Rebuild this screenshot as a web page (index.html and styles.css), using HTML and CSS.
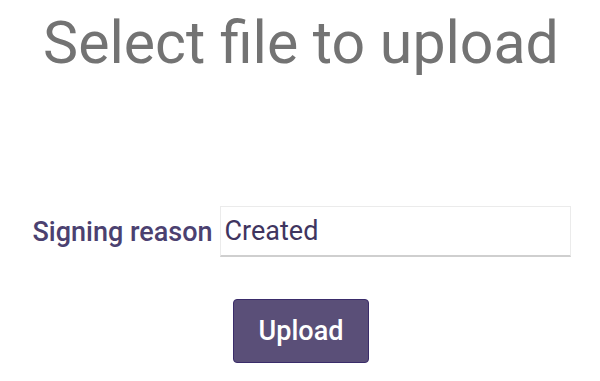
FILE: index.html
```html
<!DOCTYPE html>
<html>
<head>
<meta charset="utf-8">
<link rel="stylesheet" href="styles.css">
</head>
<body>
<div class="page">
  <h1 class="title">Select file to upload</h1>
  <form class="form">
    <div class="row">
      <label class="label" for="reason">Signing reason</label>
      <input class="input" id="reason" type="text" value="Created">
    </div>
    <div class="actions">
      <button class="btn" type="button">Upload</button>
    </div>
  </form>
</div>
</body>
</html>
```
FILE: styles.css
```css
html, body {
  margin: 0;
  padding: 0;
  background: #ffffff;
}
.page {
  width: 600px;
  font-family: Roboto, "Noto Sans", sans-serif;
  display: flex;
  flex-direction: column;
  align-items: center;
}
.title {
  margin: 8px 0 0 2px;
  font-size: 59px;
  font-weight: 400;
  line-height: 70px;
  color: #737373;
}
.form {
  margin-top: 128px;
  display: flex;
  flex-direction: column;
  align-items: center;
}
.row {
  display: flex;
  align-items: center;
  gap: 7px;
  margin-left: 3px;
}
.label {
  font-size: 27px;
  font-weight: 500;
  color: #4b4170;
}
.input {
  box-sizing: border-box;
  width: 351px;
  height: 51px;
  padding: 0 4px;
  font-family: Roboto, "Noto Sans", sans-serif;
  font-size: 27px;
  color: #3f3560;
  border: 1px solid #ebebeb;
  border-bottom: 2px solid #cfcfcf;
  outline: none;
  background: #fff;
}
.actions {
  margin-top: 42px;
  display: flex;
  justify-content: center;
  margin-left: 2px;
}
.btn {
  box-sizing: border-box;
  width: 136px;
  height: 64px;
  background: #5a4f78;
  border: 1px solid #3a2c6a;
  border-radius: 4px;
  color: #ffffff;
  font-family: Roboto, "Noto Sans", sans-serif;
  font-size: 27px;
  font-weight: 500;
}
```
